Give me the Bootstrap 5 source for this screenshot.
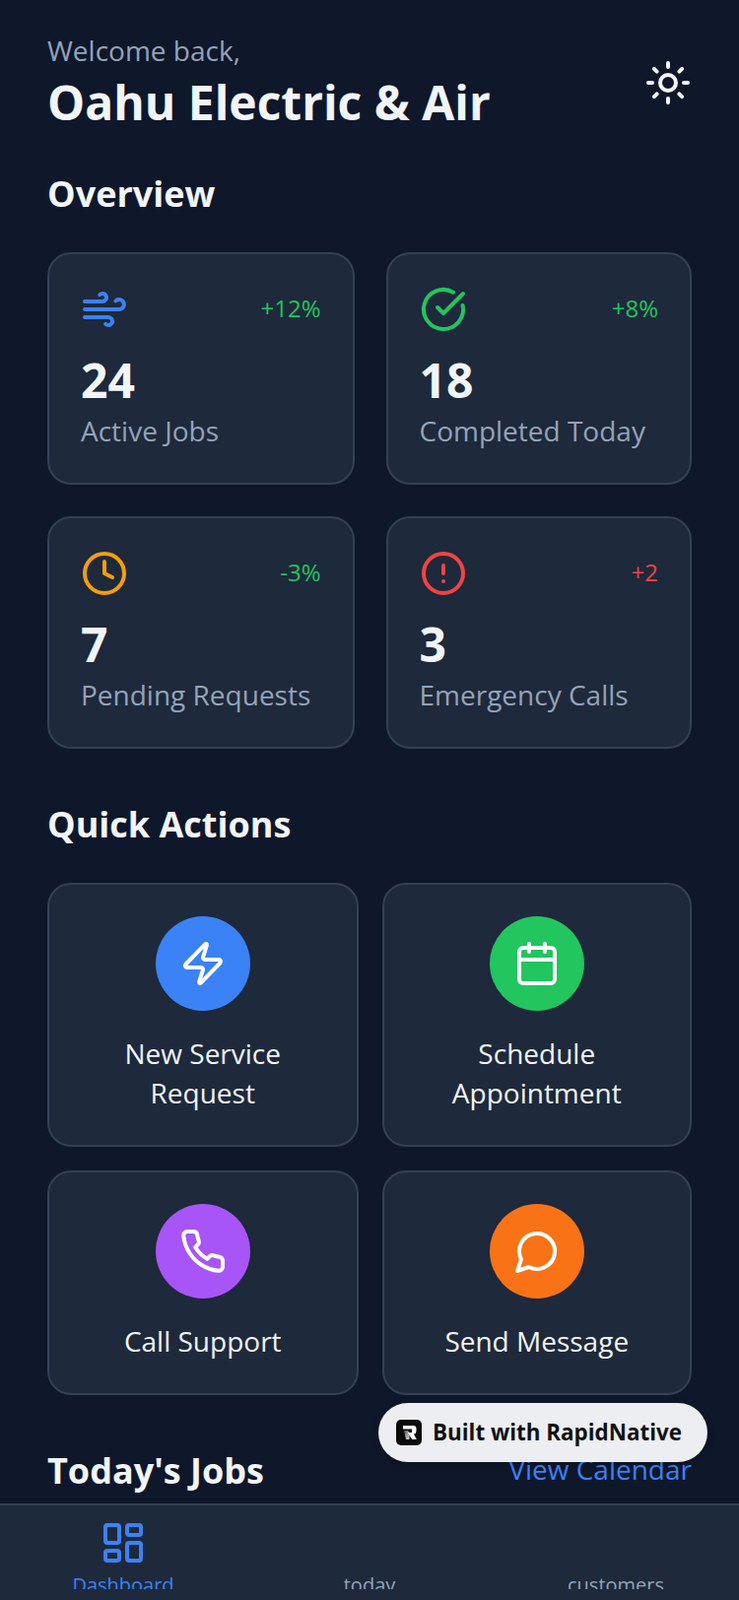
<!DOCTYPE html>
<html lang="en">
<head>
    <meta charset="UTF-8">
    <meta name="viewport" content="width=device-width, initial-scale=1.0">
    <title>Oahu Electric &amp; Air</title>
    <link rel="stylesheet" href="https://cdn.jsdelivr.net/npm/bootstrap@5.3.0/dist/css/bootstrap.min.css">
    <style>
        html, body { height: 100%; }
        body { background: #0f172a; font-family: "Open Sans", "Noto Sans", sans-serif; color: #f1f5f9; overflow: hidden; }
        svg.ico { width: 48px; height: 48px; fill: none; stroke: currentColor; stroke-width: 2; stroke-linecap: round; stroke-linejoin: round; flex: none; display: block; }

        .app-shell { height: 1624px; position: relative; }
        .app-main { padding: 32px 48px 0; overflow: hidden; }
        .welcome { font-size: 28px; color: #94a3b8; line-height: 39px; }
        .biz-name { font-size: 48px; line-height: 65px; font-weight: 700; margin: 0; }
        .sec-title { font-size: 36px; line-height: 49px; font-weight: 700; margin: 0; }
        .sec-overview { margin-top: 36px; margin-bottom: 35px; }
        .sec-next { margin-top: 52px; margin-bottom: 35px; }
        .sec-jobs { margin-top: 52px; }

        .stat-grid { display: grid; grid-template-columns: 311.5px 310.5px; gap: 32px; }
        .quick-grid { display: grid; grid-template-columns: 315.5px 314.5px; gap: 24px; }
        .tile { background: #1e293b; border: 2px solid #334155; border-radius: 24px; padding: 32px; }
        .stat-tile { padding-bottom: 34px; }
        .act-tile { padding-bottom: 33px; }
        .stat-val { font-size: 48px; line-height: 65px; font-weight: 700; margin-top: 15px; }
        .stat-label { font-size: 28px; line-height: 38px; color: #94a3b8; white-space: nowrap; }
        .stat-delta { font-size: 24px; margin-bottom: 2px; }
        .c-blue { color: #3b82f6; }
        .c-green { color: #22c55e; }
        .c-amber { color: #f59e0b; }
        .c-red { color: #ef4444; }

        .act-circle { width: 96px; height: 96px; color: #fff; margin-bottom: 23px; }
        .bg-act-blue { background: #3b82f6; }
        .bg-act-green { background: #22c55e; }
        .bg-act-purple { background: #a855f7; }
        .bg-act-orange { background: #f97316; }
        .act-label { font-size: 28px; line-height: 40px; color: #f1f5f9; }
        .view-link { font-size: 28px; color: #3b82f6; text-decoration: none; }

        .tabbar { position: absolute; left: 0; right: 0; bottom: 0; height: 98px; background: #1e293b; border-top: 2px solid #334155; padding-top: 14px; }
        .tab-item { width: 250px; height: 71px; overflow: hidden; }
        .tab-icon { height: 48px; }
        .tab-text { font-size: 20px; line-height: 27px; margin-top: 5px; color: #94a3b8; }
        .tab-on .tab-icon, .tab-on .tab-text { color: #3b82f6; }

        .built-badge { position: absolute; left: 384px; top: 1424px; width: 334px; height: 60px; background: #eceef1; color: #111; border-radius: 30px; padding-left: 18px; gap: 11px; box-shadow: 0 2px 8px rgba(0,0,0,.2); font-size: 22.4px; font-weight: 700; }
        .built-logo { width: 26px; height: 26px; display: block; }
    </style>
</head>
<body>
    <div class="app-shell">
        <div class="app-main">
            <!-- header -->
            <div class="d-flex justify-content-between align-items-center">
                <div>
                    <div class="welcome">Welcome back,</div>
                    <h1 class="biz-name">Oahu Electric &amp; Air</h1>
                </div>
                <svg class="ico" viewBox="0 0 24 24"><circle cx="12" cy="12" r="4"/><path d="M12 2v2M12 20v2M4.93 4.93l1.41 1.41M17.66 17.66l1.41 1.41M2 12h2M20 12h2M6.34 17.66l-1.41 1.41M19.07 4.93l-1.41 1.41"/></svg>
            </div>

            <!-- overview -->
            <h2 class="sec-title sec-overview">Overview</h2>
            <div class="stat-grid">
                <div class="tile stat-tile">
                    <div class="d-flex justify-content-between align-items-center">
                        <svg class="ico c-blue" viewBox="0 0 24 24"><path d="M17.7 7.7a2.5 2.5 0 1 1 1.8 4.3H2"/><path d="M9.6 4.6A2 2 0 1 1 11 8H2"/><path d="M12.6 19.4A2 2 0 1 0 14 16H2"/></svg>
                        <span class="stat-delta c-green">+12%</span>
                    </div>
                    <div class="stat-val">24</div>
                    <div class="stat-label">Active Jobs</div>
                </div>
                <div class="tile stat-tile">
                    <div class="d-flex justify-content-between align-items-center">
                        <svg class="ico c-green" viewBox="0 0 24 24"><path d="M21.801 10A10 10 0 1 1 17 3.335"/><path d="m9 11 3 3L22 4"/></svg>
                        <span class="stat-delta c-green">+8%</span>
                    </div>
                    <div class="stat-val">18</div>
                    <div class="stat-label">Completed Today</div>
                </div>
                <div class="tile stat-tile">
                    <div class="d-flex justify-content-between align-items-center">
                        <svg class="ico c-amber" viewBox="0 0 24 24"><circle cx="12" cy="12" r="10"/><path d="M12 6v6l4 2"/></svg>
                        <span class="stat-delta c-green">-3%</span>
                    </div>
                    <div class="stat-val">7</div>
                    <div class="stat-label">Pending Requests</div>
                </div>
                <div class="tile stat-tile">
                    <div class="d-flex justify-content-between align-items-center">
                        <svg class="ico c-red" viewBox="0 0 24 24"><circle cx="12" cy="12" r="10"/><path d="M12 8v4M12 16h.01"/></svg>
                        <span class="stat-delta c-red">+2</span>
                    </div>
                    <div class="stat-val">3</div>
                    <div class="stat-label">Emergency Calls</div>
                </div>
            </div>

            <!-- quick actions -->
            <h2 class="sec-title sec-next">Quick Actions</h2>
            <div class="quick-grid">
                <div class="tile act-tile d-flex flex-column align-items-center text-center">
                    <div class="act-circle rounded-circle bg-act-blue d-flex align-items-center justify-content-center">
                        <svg class="ico" viewBox="0 0 24 24"><path d="M4 14a1 1 0 0 1-.78-1.63l9.9-10.2a.5.5 0 0 1 .86.46l-1.92 6.02A1 1 0 0 0 13 10h7a1 1 0 0 1 .78 1.63l-9.9 10.2a.5.5 0 0 1-.86-.46l1.92-6.02A1 1 0 0 0 11 14z"/></svg>
                    </div>
                    <div class="act-label">New Service<br>Request</div>
                </div>
                <div class="tile act-tile d-flex flex-column align-items-center text-center">
                    <div class="act-circle rounded-circle bg-act-green d-flex align-items-center justify-content-center">
                        <svg class="ico" viewBox="0 0 24 24"><path d="M8 2v4M16 2v4M3 10h18"/><rect x="3" y="4" width="18" height="18" rx="2"/></svg>
                    </div>
                    <div class="act-label">Schedule<br>Appointment</div>
                </div>
                <div class="tile act-tile d-flex flex-column align-items-center text-center">
                    <div class="act-circle rounded-circle bg-act-purple d-flex align-items-center justify-content-center">
                        <svg class="ico" viewBox="0 0 24 24"><path d="M22 16.92v3a2 2 0 0 1-2.18 2 19.79 19.79 0 0 1-8.63-3.07 19.5 19.5 0 0 1-6-6 19.79 19.79 0 0 1-3.07-8.67A2 2 0 0 1 4.11 2h3a2 2 0 0 1 2 1.72 12.84 12.84 0 0 0 .7 2.81 2 2 0 0 1-.45 2.11L8.09 9.91a16 16 0 0 0 6 6l1.27-1.27a2 2 0 0 1 2.11-.45 12.84 12.84 0 0 0 2.81.7A2 2 0 0 1 22 16.92z"/></svg>
                    </div>
                    <div class="act-label">Call Support</div>
                </div>
                <div class="tile act-tile d-flex flex-column align-items-center text-center">
                    <div class="act-circle rounded-circle bg-act-orange d-flex align-items-center justify-content-center">
                        <svg class="ico" viewBox="0 0 24 24"><path d="M7.9 20A9 9 0 1 0 4 16.1L2 22Z"/></svg>
                    </div>
                    <div class="act-label">Send Message</div>
                </div>
            </div>

            <!-- jobs -->
            <div class="sec-jobs d-flex justify-content-between align-items-center">
                <h2 class="sec-title">Today's Jobs</h2>
                <a class="view-link mb-1" href="#">View Calendar</a>
            </div>
        </div>

        <!-- bottom tabs -->
        <div class="tabbar d-flex">
            <div class="tab-item tab-on d-flex flex-column align-items-center">
                <div class="tab-icon flex-shrink-0">
                    <svg class="ico" viewBox="0 0 24 24"><rect x="3" y="3" width="7" height="9" rx="1"/><rect x="14" y="3" width="7" height="5" rx="1"/><rect x="14" y="12" width="7" height="9" rx="1"/><rect x="3" y="16" width="7" height="5" rx="1"/></svg>
                </div>
                <div class="tab-text flex-shrink-0">Dashboard</div>
            </div>
            <div class="tab-item d-flex flex-column align-items-center">
                <div class="tab-icon flex-shrink-0"></div>
                <div class="tab-text flex-shrink-0">today</div>
            </div>
            <div class="tab-item d-flex flex-column align-items-center">
                <div class="tab-icon flex-shrink-0"></div>
                <div class="tab-text flex-shrink-0">customers</div>
            </div>
        </div>

        <!-- floating badge -->
        <div class="built-badge d-flex align-items-center">
            <svg class="built-logo" viewBox="0 0 26 26">
                <defs><linearGradient id="logoFade" x1="0" y1="0" x2="1" y2="1"><stop offset="0" stop-color="#555"/><stop offset="1" stop-color="#ddd"/></linearGradient></defs>
                <rect width="26" height="26" rx="5" fill="#0b0b0b"/>
                <path d="M8 11h4.200l1.300 2.500V20H10z" fill="url(#logoFade)"/>
                <path d="M7 6h10.500a3 3 0 0 1 3 3v2.500a3 3 0 0 1-2.500 3l2.800 5.500h-4.600l-4.400-7h4.200V9.500H7z" fill="#fff"/>
            </svg>
            <span>Built with RapidNative</span>
        </div>
    </div>

    <script src="https://cdn.jsdelivr.net/npm/bootstrap@5.3.0/dist/js/bootstrap.bundle.min.js"></script>
</body>
</html>
